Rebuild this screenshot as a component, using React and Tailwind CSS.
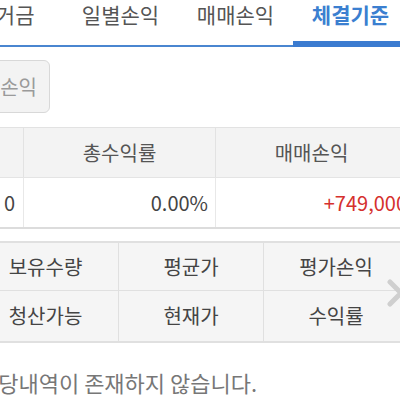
export default function App() {
  const font = { fontFamily: '"Noto Sans CJK KR", "Noto Sans", sans-serif' };
  return (
    <div className="w-[400px] h-[400px] overflow-hidden bg-white relative" style={font}>
      {/* Tabs */}
      <div className="relative h-[47px] border-b-2 border-[#4a86d0] flex ml-[-52px] w-[460px]">
        {['증거금', '일별손익', '매매손익', '체결기준'].map((t, i) => (
          <div key={t} className="w-[115px] h-full flex items-start justify-center relative">
            <span className={`text-[21px] leading-[28px] ${i === 3 ? 'text-[#3b7fd0] font-bold' : 'text-[#555]'}`}>{t}</span>
            {i === 3 && <div className="absolute left-0 right-0 bottom-[-2px] h-[6px] bg-[#3b7bd0]" />}
          </div>
        ))}
      </div>
      {/* Button row */}
      <div className="pt-[13px] h-[80px]">
        <div className="ml-[-40px] w-[90px] h-[53px] rounded-[6px] border border-[#d8d8d8] bg-[#f3f3f3] flex items-center justify-end pr-[12px]">
          <span className="text-[20px] text-[#9a9a9a]">손익</span>
        </div>
      </div>
      {/* Summary table */}
      <div className="ml-[-169px] w-[576px] border-t border-[#e2e2e2] border-b-2 border-b-[#dcdcdc]">
        <div className="grid grid-cols-3 h-[50px] bg-[#f3f3f3] border-b border-[#e4e4e4]">
          {['총평가', '총수익률', '매매손익'].map((t, i) => (
            <div key={t} className={`flex items-center justify-center text-[20px] text-[#555] ${i > 0 ? 'border-l border-[#e2e2e2]' : ''}`}>{t}</div>
          ))}
        </div>
        <div className="grid grid-cols-3 h-[49px] bg-white">
          <div className="flex items-center justify-end pr-[8px] text-[20px] text-[#444]">0</div>
          <div className="flex items-center justify-end pr-[7px] text-[20px] text-[#444] border-l border-[#e8e8e8]">0.00%</div>
          <div className="flex items-center justify-end pr-[0px] text-[20px] text-[#d5302e] border-l border-[#e8e8e8]">+749,000</div>
        </div>
      </div>
      {/* Holdings header */}
      <div className="relative mt-[12px] ml-[-27px] w-[435px] border-t-2 border-[#e0e0e0] border-b-2 border-b-[#e0e0e0] bg-[#f5f5f5]">
        <div className="grid grid-cols-3 h-[48px] border-b border-[#e0e0e0]">
          {['보유수량', '평균가', '평가손익'].map((t, i) => (
            <div key={t} className={`flex items-center justify-center text-[20px] text-[#444] ${i > 0 ? 'border-l border-[#e0e0e0]' : ''}`}>{t}</div>
          ))}
        </div>
        <div className="grid grid-cols-3 h-[50px]">
          {['청산가능', '현재가', '수익률'].map((t, i) => (
            <div key={t} className={`flex items-center justify-center text-[20px] text-[#444] ${i > 0 ? 'border-l border-[#e0e0e0]' : ''}`}>{t}</div>
          ))}
        </div>
        <svg className="absolute left-[413px] top-[36px]" width="20" height="28" viewBox="0 0 20 28">
          <path d="M4 3 L15 14 L4 25" fill="none" stroke="#cfcfcf" strokeWidth="5" strokeLinecap="round" strokeLinejoin="round" />
        </svg>
      </div>
      <div className="ml-[-22px] mt-[24px] text-[22px] leading-[30px] text-[#777] whitespace-nowrap">해당내역이 존재하지 않습니다.</div>
    </div>
  );
}
